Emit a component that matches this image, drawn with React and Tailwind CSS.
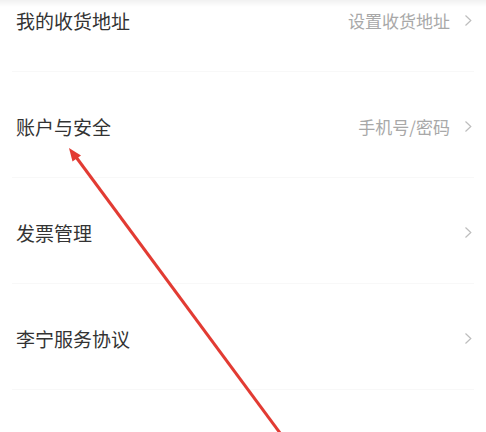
import React from 'react';

const rows = [
  { title: '我的收货地址', value: '设置收货地址' },
  { title: '账户与安全', value: '手机号/密码' },
  { title: '发票管理', value: '' },
  { title: '李宁服务协议', value: '' },
  { title: '', value: '', chevron: false }
];

const Chevron = () => (
  <svg width="8" height="13" viewBox="0 0 8 13" className="shrink-0">
    <path d="M1.5 1.5 L6.8 6.5 L1.5 11.5" fill="none" stroke="#bdbdbd" strokeWidth="1.2" />
  </svg>
);

const App = () => {
  return (
    <div
      className="relative w-[486px] h-[432px] overflow-hidden bg-white"
      style={{ fontFamily: '"Noto Sans CJK SC", "Noto Sans", sans-serif' }}
    >
      <div className="-mt-[34px]">
        {rows.map((row, i) => (
          <div key={i} className="mx-3 border-b border-[#f8f8f8]">
            <div className="h-[105px] pt-[4px] pl-1 pr-[2px] flex items-center justify-between">
              <span className="text-[19px] leading-none text-[#333333]">{row.title}</span>
              {row.chevron !== false && (
                <div className="flex items-center gap-[14px]">
                  {row.value && <span className="text-[17px] leading-none text-[#a8a8a8]">{row.value}</span>}
                  <Chevron />
                </div>
              )}
            </div>
          </div>
        ))}
      </div>

      {/* faint shadow at the top edge */}
      <div className="absolute top-0 left-0 right-0 h-[7px] bg-gradient-to-b from-[#f1f1f1] to-white/0" />

      {/* red annotation arrow */}
      <svg className="absolute inset-0" width="486" height="432" viewBox="0 0 486 432">
        <line x1="283" y1="437" x2="76" y2="157" stroke="#e23b33" strokeWidth="3" />
        <polygon points="69,148 81,155.5 72.5,161.5" fill="#e23b33" />
      </svg>
    </div>
  );
};

export default App;
